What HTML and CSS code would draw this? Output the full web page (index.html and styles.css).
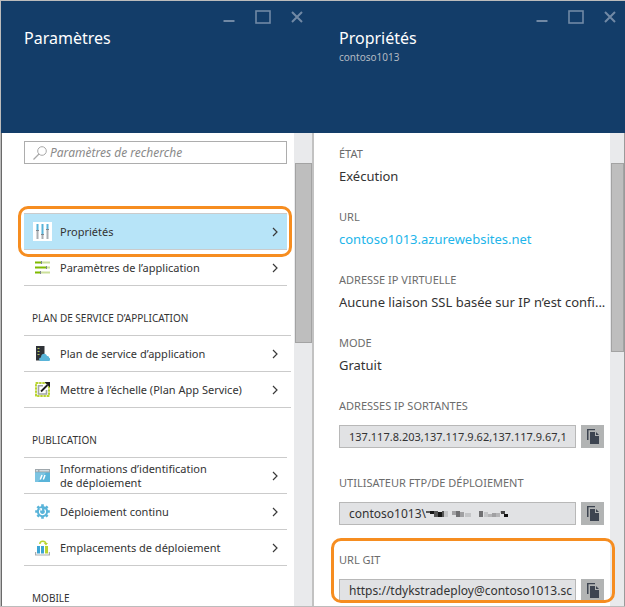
FILE: index.html
```html
<!DOCTYPE html>
<html lang="fr">
<head>
<meta charset="utf-8">
<title>Paramètres</title>
<link rel="stylesheet" href="styles.css">
</head>
<body>
<svg class="defs" aria-hidden="true">
  <symbol id="min" viewBox="0 0 12 14"><path d="M0.5 11H11.5" stroke="currentColor" stroke-width="2"/></symbol>
  <symbol id="max" viewBox="0 0 16 14"><rect x="1" y="1" width="14" height="12" fill="none" stroke="currentColor" stroke-width="1.6"/></symbol>
  <symbol id="close" viewBox="0 0 12 14"><path d="M1 2L11 12M11 2L1 12" stroke="currentColor" stroke-width="2"/></symbol>
  <symbol id="chev" viewBox="0 0 6 10"><path d="M1 1L5 5L1 9" fill="none" stroke="#3a3a3a" stroke-width="1.2"/></symbol>
  <symbol id="copy" viewBox="0 0 12 15"><path d="M0 0H8V1.3H1.5V11H0Z" fill="#3d4450"/><path d="M3 3H8V7H12V15H3Z" fill="#3d4450"/><path d="M9 3L12 6H9Z" fill="#3d4450"/></symbol>
</svg>
<div class="portal">
  <section class="blade">
    <header class="head">
      <div class="controls">
        <button aria-label="Réduire"><svg width="12" height="14"><use href="#min"/></svg></button>
        <button aria-label="Agrandir"><svg width="16" height="14"><use href="#max"/></svg></button>
        <button aria-label="Fermer"><svg width="12" height="14"><use href="#close"/></svg></button>
      </div>
      <h1>Paramètres</h1>
    </header>
    <div class="body">
      <div class="content settings">
        <div class="search">
          <svg width="14" height="14" viewBox="0 0 14 14" fill="none" stroke="#a8a8a8"><circle cx="9" cy="5" r="4.3"/><path d="M6 8L.5 13.5" stroke-width="1.2"/></svg>
          <input type="text" aria-label="Paramètres de recherche" placeholder="Paramètres de recherche">
        </div>
        <nav>
          <ul class="rows first">
            <li class="marked"><a class="row selected" href="#">
              <svg class="icon tile" width="19" height="19" viewBox="0 0 19 19"><path d="M0 0H19V19H0Z" fill="#fff"/><path d="M4.5 2V8M9.5 2V12M14.5 2V7" stroke="#59b4d9" stroke-width="2"/><path d="M4.5 9V17M9.5 13V17M14.5 8V17" stroke="#a9aeb2" stroke-width="2"/><path d="M3 8.5H6M8 12.5H11M13 7.5H16" stroke="#7d868e" stroke-width="1"/></svg>
              <span>Propriétés</span><svg class="chev" width="6" height="10"><use href="#chev"/></svg></a></li>
            <li><a class="row" href="#">
              <svg class="icon" width="15" height="15" viewBox="0 0 15 15"><path d="M0 2.5H6M0 7.5H11M0 12.5H5" stroke="#7fba00" stroke-width="2.2"/><path d="M6 2.5H15M11 7.5H15M5 12.5H15" stroke="#cbe09a" stroke-width="2.2"/><path d="M6.5 1V4M11.5 6V9M5.5 11V14" stroke="#7d868e" stroke-width="1"/></svg>
              <span>Paramètres de l’application</span><svg class="chev" width="6" height="10"><use href="#chev"/></svg></a></li>
          </ul>
          <h2>PLAN DE SERVICE D’APPLICATION</h2>
          <ul class="rows wide">
            <li><a class="row" href="#">
              <svg class="icon" width="15" height="15" viewBox="0 0 15 15"><path d="M1 0H9.5V14.5H1Z" fill="#2f3237"/><path d="M2 2.5H5M2 5.5H5M2 8.5H5" stroke="#68717a"/><path d="M3 2.5H4M3 5.5H4M3 8.5H4" stroke="#b8d432"/><path d="M6 15C3.4 15 3.6 11.4 6 11.5C5.8 7.2 11 6.6 12 10C14 9.8 14.2 11.4 14 11.8C15.8 12.2 15.4 15 14 15Z" fill="#59b4d9"/></svg>
              <span>Plan de service d’application</span><svg class="chev" width="6" height="10"><use href="#chev"/></svg></a></li>
            <li><a class="row" href="#">
              <svg class="icon" width="15" height="15" viewBox="0 0 15 15"><path d="M1 1H14V14H1Z" fill="none" stroke="#e4eda8" stroke-width="2"/><path d="M1 1H14V14H1Z" fill="none" stroke="#b8d432" stroke-width="2" stroke-dasharray="2 1.25"/><path d="M8 3.8H3.5V12H11.5V8" fill="#fff" stroke="#a0a4a8" stroke-width="1.6"/><path d="M6 9.5L12.5 3" stroke="#1e1e1e" stroke-width="1.8"/><path d="M9.5 0H15V5.5Z" fill="#1e1e1e"/></svg>
              <span>Mettre à l’échelle (Plan App Service)</span><svg class="chev" width="6" height="10"><use href="#chev"/></svg></a></li>
          </ul>
          <h2>PUBLICATION</h2>
          <ul class="rows">
            <li><a class="row" href="#">
              <svg class="icon" width="15" height="13" viewBox="0 0 15 13"><path d="M0 0H15V13H0Z" fill="#59b4d9"/><path d="M0 0H15V3.5H0Z" fill="#a0a8ad"/><path d="M1 1.8H3M4.5 1.8H14" stroke="#e8f4fa" stroke-width="1"/><path d="M0 3.5H11L3 13H0Z" fill="#7cc4e2"/><path d="M7 6L5.3 10.5M10 6L8.3 10.5" stroke="#fff" stroke-width="1.5"/></svg>
              <span>Informations d’identification<br>de déploiement</span><svg class="chev" width="6" height="10"><use href="#chev"/></svg></a></li>
            <li><a class="row" href="#">
              <svg class="icon" width="15" height="15" viewBox="0 0 16 16"><circle cx="8" cy="8" r="6" fill="#59b4d9"/><path d="M8 .2V15.8M.2 8H15.8M2.6 2.6L13.4 13.4M13.4 2.6L2.6 13.4" stroke="#59b4d9" stroke-width="2.8"/><path d="M5.8 5.8A3.2 3.2 0 1 0 10.2 5.8" fill="none" stroke="#fff" stroke-width="1.3"/><path d="M4.5 4.5H7.5V7.5Z" fill="#fff"/></svg>
              <span>Déploiement continu</span><svg class="chev" width="6" height="10"><use href="#chev"/></svg></a></li>
            <li><a class="row" href="#">
              <svg class="icon" width="15" height="16" viewBox="0 0 15 16"><path d="M.6 12V15H14.4V12" fill="none" stroke="#a8adb0" stroke-width="1.2"/><path d="M2 6H5V13.5H2ZM6 6H9V13.5H6Z" fill="#3ca5d4"/><path d="M10 6H13V13.5H10Z" fill="#b8d432"/><path d="M4.8 4C5 .5 10.2 .3 11 3.6" fill="none" stroke="#b8d432" stroke-width="1.5"/><path d="M8.8 3H13L11 5.4Z" fill="#b8d432"/></svg>
              <span>Emplacements de déploiement</span><svg class="chev" width="6" height="10"><use href="#chev"/></svg></a></li>
          </ul>
          <h2>MOBILE</h2>
        </nav>
      </div>
      <div class="scroll"><div class="thumb"></div></div>
    </div>
  </section>
  <section class="blade">
    <header class="head">
      <div class="controls">
        <button aria-label="Réduire"><svg width="12" height="14"><use href="#min"/></svg></button>
        <button aria-label="Agrandir"><svg width="16" height="14"><use href="#max"/></svg></button>
        <button aria-label="Fermer"><svg width="12" height="14"><use href="#close"/></svg></button>
      </div>
      <h1>Propriétés</h1>
      <p>contoso1013</p>
    </header>
    <div class="body">
      <div class="content props">
        <dl>
          <div><dt>ÉTAT</dt><dd>Exécution</dd></div>
          <div><dt>URL</dt><dd><a href="#">contoso1013.azurewebsites.net</a></dd></div>
          <div><dt>ADRESSE IP VIRTUELLE</dt><dd>Aucune liaison SSL basée sur IP n’est confi...</dd></div>
          <div><dt>MODE</dt><dd>Gratuit</dd></div>
        </dl>
        <div class="field">
          <label for="ips">ADRESSES IP SORTANTES</label>
          <div class="copyable"><input id="ips" class="digits" type="text" readonly value="137.117.8.203,137.117.9.62,137.117.9.67,1"><button aria-label="Copier"><svg width="12" height="15"><use href="#copy"/></svg></button></div>
        </div>
        <div class="field">
          <label for="ftp">UTILISATEUR FTP/DE DÉPLOIEMENT</label>
          <div class="copyable"><input id="ftp" type="text" readonly value="contoso1013\"><svg class="mosaic" width="84" height="8" viewBox="0 0 84 8" shape-rendering="crispEdges"><path d="M0 1H4V3H0ZM8 1H12V7H8ZM16 1H18V7H16Z" fill="#555"/><path d="M4 1H8V4H4ZM12 2H16V7H12Z" fill="#161616"/><path d="M18 1H22V7H18ZM39 3H45V7H39ZM58 2H62V7H58ZM74 1H78V3H74Z" fill="#c4c5c7"/><path d="M26 1H30V5H26ZM34 2H38V7H34ZM66 3H70V7H66Z" fill="#a0a0a2"/><path d="M30 1H34V7H30ZM53 1H57V7H53Z" fill="#707072"/><path d="M62 4H66V7H62ZM70 3H74V7H70Z" fill="#b4b4b6"/><path d="M75 1H79V4H75Z" fill="#444"/><path d="M78 4H82V7H78Z" fill="#111"/></svg><button aria-label="Copier"><svg width="12" height="15"><use href="#copy"/></svg></button></div>
        </div>
        <div class="field marked">
          <label for="git">URL GIT</label>
          <div class="copyable"><input id="git" type="text" readonly value="https://tdykstradeploy@contoso1013.sc"><button aria-label="Copier"><svg width="12" height="15"><use href="#copy"/></svg></button></div>
        </div>
      </div>
      <div class="scroll"><div class="thumb"></div></div>
    </div>
  </section>
</div>
</body>
</html>
```
FILE: styles.css
```css
* { box-sizing: border-box; }
body, h1, h2, p, ul, dl, dd { margin: 0; padding: 0; }
body {
  font-family: "Noto Sans", "Open Sans", sans-serif;
  font-size: 11px;
  color: #333;
  background: #fff;
}
ul { list-style: none; }
a { color: inherit; text-decoration: none; }
button { border: 0; padding: 0; background: none; color: inherit; }
svg { display: block; flex: none; }
.defs { position: absolute; width: 0; height: 0; }

.portal {
  display: grid;
  grid-template-columns: 313fr 311fr;
  height: 100vh;
  overflow: hidden;
  border: 1px solid #bcbcbc;
  border-right: 0;
}
.blade { display: flex; flex-direction: column; min-width: 0; min-height: 0; }
.head {
  flex: none;
  height: 132px;
  padding: 9px 11px 0 23px;
  background: #133d69;
  color: #fff;
}
.blade + .blade .head { padding: 9px 9px 0 25px; }
.controls { display: flex; justify-content: flex-end; gap: 20px; height: 14px; color: #7189a5; }
h1 { margin-top: 2px; font-size: 16px; line-height: 24px; font-weight: 400; }
.head p { font-size: 10px; line-height: 14px; color: #b2b9c2; }

.body { display: flex; flex: 1; min-height: 0; border-left: 1px solid #6a6a6a; }
.blade + .blade .body { border-left: 0; border-right: 1px solid #9a9a9a; }
.content { flex: 1; min-width: 0; }
.scroll { flex: none; width: 20px; background: #e9eaec; border-right: 2px solid #c2c2c2; }
.blade + .blade .scroll { width: 14px; border-right: 0; }
.thumb {
  height: 38%;
  margin: 30px 0 0 1px;
  background: #bebebe;
  border: 1px solid #a3a3a3;
}
.blade + .blade .thumb { height: 40%; }

.settings { padding: 8px 7px 0 22px; }
.search { display: flex; align-items: center; gap: 3px; height: 23px; padding-left: 8px; border: 1px solid #adadad; }
.search input { flex: 1; min-width: 0; border: 0; padding: 0; background: none; font: italic 12px "Noto Sans", sans-serif; }
.search input::placeholder { color: #8a8a8a; opacity: 1; }
.rows { border-top: 1px solid #cbcbcb; }
.rows.first { margin-top: 49px; }
.rows.wide { margin-right: -4px; }
.rows.wide .row { padding-right: 13px; }
.row {
  display: flex;
  align-items: center;
  height: 36px;
  padding: 0 9px 0 11px;
  border-bottom: 1px solid #cbcbcb;
  line-height: 14px;
}
.icon { margin-right: 10px; }
.tile { margin: 0 8px 0 -2px; }
.chev { margin-left: auto; }
.selected { background: #b7e4f8; }
.marked { position: relative; }
.marked::after {
  content: "";
  position: absolute;
  inset: -8px -5px -7px -6px;
  border: 3px solid #f68d20;
  border-radius: 10px;
  pointer-events: none;
}
h2 { height: 49px; padding: 24px 0 0 8px; font-size: 10px; line-height: 16px; font-weight: 400; }

.props { padding: 12px 6px 0 25px; }
dl > div { margin-bottom: 22px; }
dt, label { display: block; line-height: 18px; color: #6c6c6c; }
dd { margin-top: 3px; font-size: 13px; line-height: 20px; white-space: nowrap; }
dd a { color: #22b5ea; }
.field { margin-bottom: 26px; }
.copyable { position: relative; display: flex; gap: 5px; margin-top: 10px; }
.copyable input {
  flex: 1;
  min-width: 0;
  height: 23px;
  padding: 0 0 0 9px;
  border: 1px solid #b8b8b8;
  background: #e1e2e4;
  color: #333;
  font: 12px "Noto Sans", sans-serif;
}
.copyable .digits { font-size: 11px; }
.copyable button { display: flex; align-items: center; justify-content: center; width: 23px; height: 23px; background: #b2b4b4; }
.mosaic { position: absolute; left: 87px; top: 8px; }
.field.marked::after { inset: -13px -11px -1px -8px; }
```
